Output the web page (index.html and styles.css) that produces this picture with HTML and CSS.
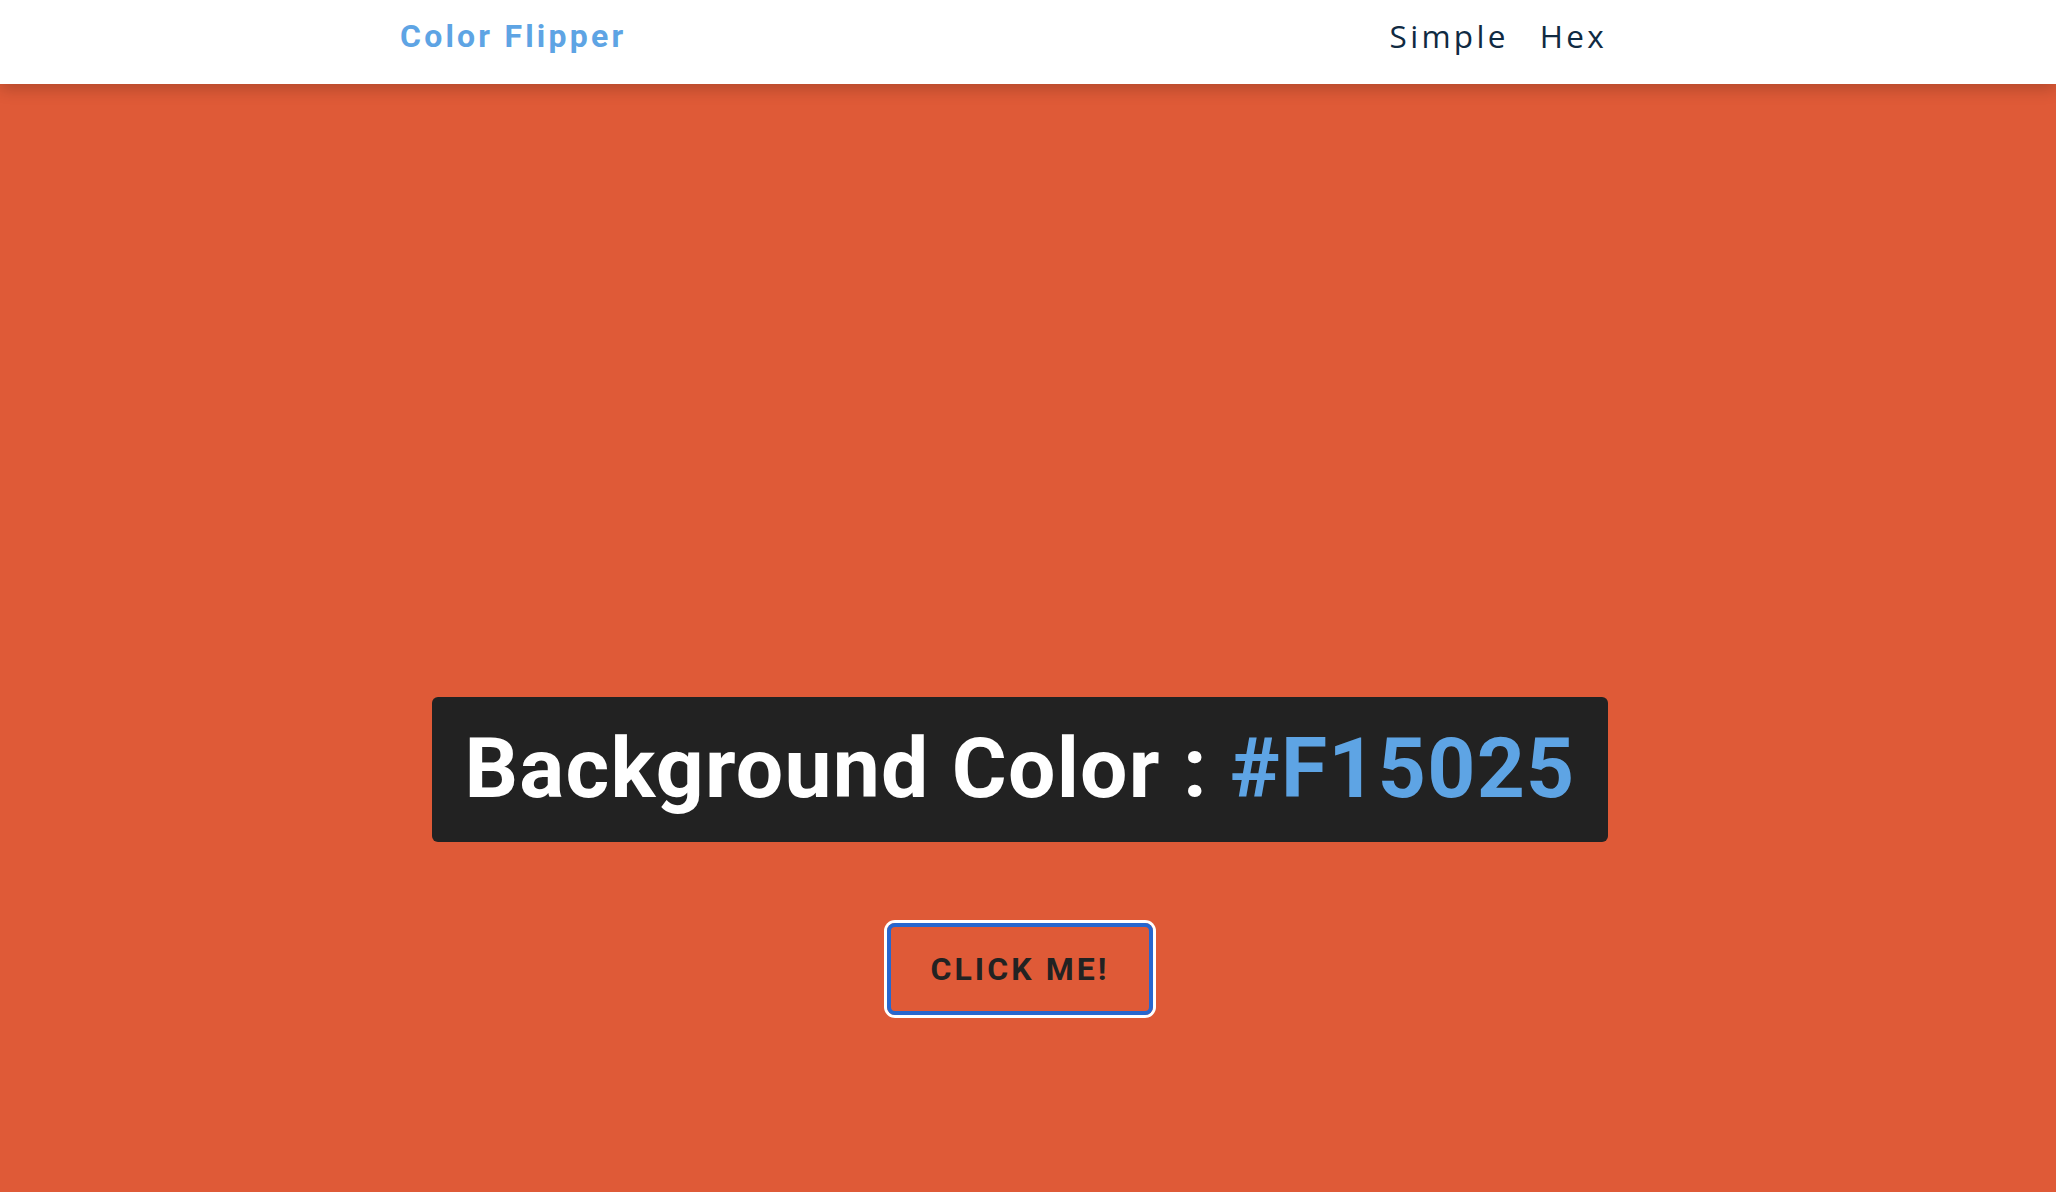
FILE: index.html
```html
<!DOCTYPE html>
<html lang="en">
<head>
<meta charset="utf-8">
<title>Color Flipper</title>
<link rel="stylesheet" href="styles.css">
</head>
<body>
<nav class="nav">
  <div class="nav-center">
    <h4 class="logo">Color Flipper</h4>
    <ul class="nav-links">
      <li><a href="#" class="nav-link">Simple</a></li>
      <li><a href="#" class="nav-link">Hex</a></li>
    </ul>
  </div>
</nav>
<main class="main">
  <div class="container">
    <h2 class="banner">Background Color : <span class="color">#F15025</span></h2>
    <button class="btn" type="button">click me!</button>
  </div>
</main>
</body>
</html>
```

FILE: styles.css
```css
* {
  box-sizing: border-box;
  margin: 0;
  padding: 0;
}
html, body {
  height: 100%;
}
body {
  background: #df5a37;
  font-family: Roboto, "Liberation Sans", sans-serif;
  overflow: hidden;
  padding-right: 16px;
}
.nav {
  height: 84px;
  background: #ffffff;
  box-shadow: 0 5px 15px rgba(0, 0, 0, 0.2);
  position: relative;
  z-index: 1;
  margin-right: -16px;
  padding-right: 16px;
}
.nav-center {
  width: 1240px;
  margin: 0 auto;
  height: 100%;
  display: flex;
  align-items: center;
  justify-content: space-between;
}
.logo {
  font-family: Roboto, "Liberation Sans", sans-serif;
  font-weight: 700;
  font-size: 32px;
  letter-spacing: 3.2px;
  color: #5ea4e4;
  margin-top: -12px;
}
.nav-links {
  list-style: none;
  display: flex;
  gap: 31px;
  margin-right: 33px;
  margin-top: -14px;
}
.nav-link {
  font-family: "Open Sans", "Liberation Sans", sans-serif;
  font-size: 31.5px;
  letter-spacing: 3.3px;
  color: #102a42;
  text-decoration: none;
}
.main {
  padding-top: 613px;
}
.container {
  display: flex;
  flex-direction: column;
  align-items: center;
  gap: 81px;
}
.banner {
  background: #222222;
  color: #ffffff;
  font-weight: 700;
  font-size: 84px;
  line-height: 98px;
  letter-spacing: 1.25px;
  padding: 23px 32px 24px;
  border-radius: 6px;
  white-space: nowrap;
}
.color {
  color: #5ea4e4;
}
.btn {
  font-family: Roboto, "Liberation Sans", sans-serif;
  font-weight: 700;
  font-size: 32px;
  letter-spacing: 3.05px;
  text-transform: uppercase;
  color: #222222;
  background: transparent;
  border: 4px solid #2767cf;
  border-radius: 8px;
  box-shadow: 0 0 0 3px #ffffff;
  width: 266px;
  height: 92px;
  padding-left: 0;
  cursor: pointer;
}
```
